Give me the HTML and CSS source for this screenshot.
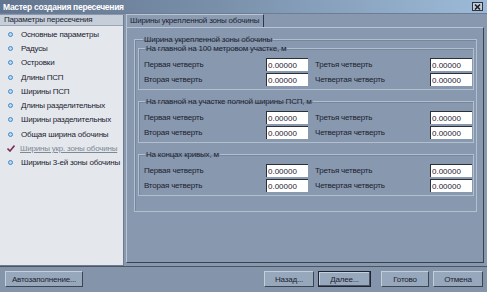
FILE: index.html
```html
<!DOCTYPE html>
<html lang="ru">
<head>
    <meta charset="UTF-8">
    <title>Мастер создания пересечения</title>
    <link rel="stylesheet" href="styles.css">
</head>
<body>
    <div class="window">
        <div class="titlebar">
            <span class="title">Мастер создания пересечения</span>
            <span class="close">
                <svg width="9" height="8" viewBox="0 0 9 8"><path d="M2 1.5 L7 6.5 M7 1.5 L2 6.5" stroke="#1a1f28" stroke-width="1.6"/></svg>
            </span>
        </div>

        <div class="main">
            <aside class="steps">
                <div class="steps-head">Параметры пересечения</div>
                <ul class="step-list">
                    <li class="step"><span class="dot"></span>Основные параметры</li>
                    <li class="step"><span class="dot"></span>Радусы</li>
                    <li class="step"><span class="dot"></span>Островки</li>
                    <li class="step"><span class="dot"></span>Длины ПСП</li>
                    <li class="step"><span class="dot"></span>Ширины ПСП</li>
                    <li class="step"><span class="dot"></span>Длины разделительных</li>
                    <li class="step"><span class="dot"></span>Ширины разделительных</li>
                    <li class="step"><span class="dot"></span>Общая ширина обочины</li>
                    <li class="step current">
                        <svg class="check" width="8" height="7" viewBox="0 0 8 7"><path d="M0.5 3.5 L3 6 L7.5 0.5" fill="none" stroke="#7a2e5a" stroke-width="1.6"/></svg>
                        <span class="step-text">Ширины укр. зоны обочины</span>
                    </li>
                    <li class="step"><span class="dot"></span>Ширины 3-ей зоны обочины</li>
                </ul>
            </aside>

            <section class="page">
                <div class="tabs">
                    <div class="tab">Ширины укрепленной зоны обочины</div>
                </div>
                <div class="tab-body">
                    <fieldset class="group">
                        <legend>Ширина укрепленной зоны обочины</legend>

                        <fieldset class="subgroup">
                            <legend>На главной на 100 метровом участке, м</legend>
                            <div class="rows">
                                <label>Первая четверть</label><input class="num" value="0.00000">
                                <label class="second">Третья четверть</label><input class="num" value="0.00000">
                                <label>Вторая четверть</label><input class="num" value="0.00000">
                                <label class="second">Четвертая четверть</label><input class="num" value="0.00000">
                            </div>
                        </fieldset>

                        <fieldset class="subgroup">
                            <legend>На главной на участке полной ширины ПСП, м</legend>
                            <div class="rows">
                                <label>Первая четверть</label><input class="num" value="0.00000">
                                <label class="second">Третья четверть</label><input class="num" value="0.00000">
                                <label>Вторая четверть</label><input class="num" value="0.00000">
                                <label class="second">Четвертая четверть</label><input class="num" value="0.00000">
                            </div>
                        </fieldset>

                        <fieldset class="subgroup">
                            <legend>На концах кривых, м</legend>
                            <div class="rows">
                                <label>Первая четверть</label><input class="num" value="0.00000">
                                <label class="second">Третья четверть</label><input class="num" value="0.00000">
                                <label>Вторая четверть</label><input class="num" value="0.00000">
                                <label class="second">Четвертая четверть</label><input class="num" value="0.00000">
                            </div>
                        </fieldset>
                    </fieldset>
                </div>
            </section>
        </div>

        <div class="footer">
            <button class="btn wide">Автозаполнение...</button>
            <div class="spacer"></div>
            <button class="btn">Назад...</button>
            <button class="btn default">Далее...</button>
            <button class="btn gap">Готово</button>
            <button class="btn">Отмена</button>
        </div>
    </div>
</body>
</html>
```

FILE: styles.css
```css
* {
    margin: 0;
    padding: 0;
    box-sizing: border-box;
}

body {
    width: 487px;
    height: 292px;
    overflow: hidden;
    background: #8898ae;
    font-family: 'Liberation Sans', Arial, sans-serif;
    font-size: 8px;
    letter-spacing: -0.2px;
    color: #1c2230;
}

.window {
    display: flex;
    flex-direction: column;
    height: 292px;
}

/* Заголовок окна */
.titlebar {
    height: 14px;
    display: flex;
    align-items: center;
    justify-content: space-between;
    padding: 0 3px 0 3px;
    background: linear-gradient(90deg, #62748e 0%, #7a90aa 45%, #9cbad8 100%);
    border-bottom: 1px solid #6d7d94;
}

.title {
    color: #ffffff;
    font-weight: bold;
    font-size: 8.5px;
    letter-spacing: -0.3px;
}

.close {
    width: 11px;
    height: 9px;
    display: flex;
    align-items: center;
    justify-content: center;
    background: #c4ccd6;
    border: 1px solid #2c3440;
    margin-right: 1px;
}

.main {
    flex: 1;
    display: flex;
    gap: 2px;
    min-height: 0;
}

/* Список шагов */
.steps {
    width: 124px;
    margin-top: 1px;
    background: #e4e8ed;
    border-right: 1px solid #6e7c90;
    border-bottom: 1px solid #6e7c90;
}

.steps-head {
    height: 11px;
    line-height: 10px;
    padding-left: 4px;
    background: #c6ced9;
    border-bottom: 1px solid #9aa6b6;
    color: #1c2230;
}

.step-list {
    list-style: none;
    padding-top: 1px;
}

.step {
    height: 14.3px;
    display: flex;
    align-items: center;
    padding-left: 8px;
    gap: 8px;
    white-space: nowrap;
}

.dot {
    width: 5px;
    height: 5px;
    border-radius: 50%;
    border: 1.5px solid #3d8ccc;
    background: #bcd6ea;
    flex-shrink: 0;
}

.check {
    display: block;
    flex-shrink: 0;
    width: 8px;
    height: 7px;
}

.step.current {
    gap: 5px;
    padding-left: 7px;
    color: #7e8794;
}

.step.current .step-text {
    text-decoration: underline;
}

/* Вкладка */
.page {
    flex: 1;
    display: flex;
    flex-direction: column;
    padding-right: 3px;
    padding-bottom: 3px;
}

.tabs {
    display: flex;
    height: 13px;
}

.tab {
    width: 138px;
    height: 13px;
    line-height: 12px;
    padding-left: 3px;
    background: #8c9cb2;
    border-top: 1px solid #b9c5d4;
    border-left: 1px solid #b9c5d4;
    border-right: 1px solid #2e3642;
    color: #1c2230;
    white-space: nowrap;
}

.tab-body {
    flex: 1;
    border-top: 1px solid #b9c5d4;
    border-left: 1px solid #b9c5d4;
    border-right: 1px solid #39424e;
    border-bottom: 1px solid #39424e;
    padding: 7px 6px 0 7px;
}

fieldset {
    border: 1px solid #b2bfcf;
    box-shadow: inset 1px 1px 0 #76869c;
}

legend {
    padding: 0 1px;
    margin-left: 5px;
    line-height: 9px;
    white-space: nowrap;
}

.group {
    padding: 0 2px 8px 3px;
}

.subgroup {
    margin-bottom: 7px;
    padding: 0 0 2px 5px;
}

.subgroup legend {
    margin-left: 1px;
}

.rows {
    display: grid;
    grid-template-columns: 122px 42px 122px 43px;
    grid-auto-rows: 15px;
    align-items: center;
    padding-top: 4px;
}

.rows label.second {
    padding-left: 7px;
}

.num {
    width: 42px;
    height: 13px;
    font-family: 'Liberation Sans', Arial, sans-serif;
    font-size: 8px;
    color: #1c2230;
    background: #ffffff;
    border: none;
    border-top: 1px solid #2a2f38;
    border-left: 1px solid #2a2f38;
    padding-left: 1px;
    outline: none;
}

/* Кнопки */
.footer {
    height: 26px;
    display: flex;
    align-items: flex-start;
    gap: 4px;
    padding: 4px 4px 0 5px;
    border-top: 1px solid #4a5566;
    background: #8494aa;
}

.spacer {
    flex: 1;
}

.btn {
    width: 50px;
    height: 16px;
    font-family: 'Liberation Sans', Arial, sans-serif;
    font-size: 8px;
    letter-spacing: -0.2px;
    color: #1c2230;
    background: #97a7bc;
    border: 1px solid;
    border-color: #c4cfdc #3c4552 #3c4552 #c4cfdc;
}

.btn.wide {
    width: 78px;
}

.btn.default {
    width: 53px;
    border: 1px solid #1e2430;
    box-shadow: inset -1px -1px 0 #4a5466, inset 1px 1px 0 #c4cfdc;
}

.btn.gap {
    margin-left: 6px;
    width: 48px;
}
```
